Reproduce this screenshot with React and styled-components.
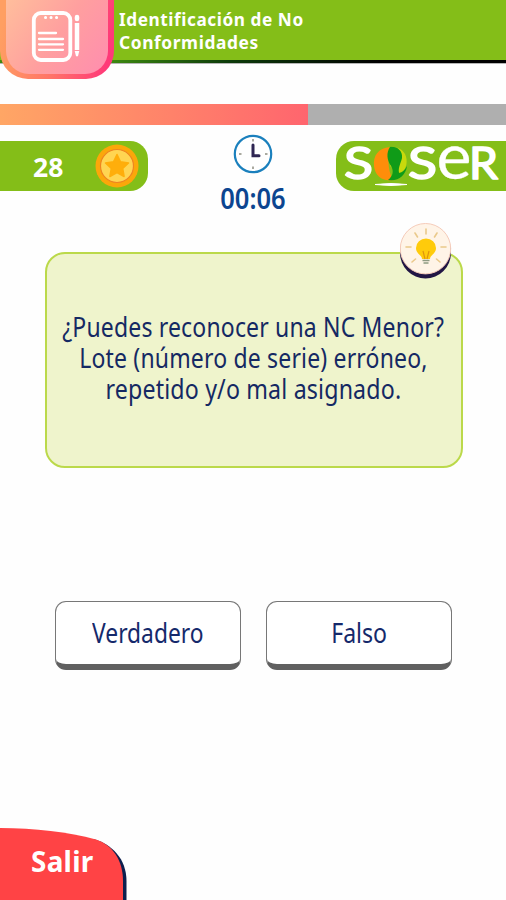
import React from 'react';
import styled, { createGlobalStyle } from 'styled-components';

const GlobalStyle = createGlobalStyle`
    body {
        margin: 0;
        background: #fefefe;
        overflow: hidden;
    }
    * {
        box-sizing: border-box;
    }
`

const Screen = styled.div`
    display: flex;
    flex-direction: column;
    width: 506px;
    height: 900px;
    overflow: hidden;
    background: #fefefe;
    font-family: "Noto Sans", sans-serif;
`

const Header = styled.header`
    display: flex;
    align-items: flex-start;
    flex: none;
    height: 64px;
    background: linear-gradient(#84be18 0 60px, transparent 60px),
        linear-gradient(90deg, #3d8a10 110px, #0c3a0a 230px, #000 380px);
    border-bottom: 1px solid #b5b5b5;
`

const CategoryBadge = styled.div`
    flex: none;
    width: 114px;
    height: 79px;
    padding: 0 6px 5px;
    border-radius: 0 0 28px 28px;
    background: linear-gradient(100deg, #ff9f62 5%, #ff7468 50%, #ff3a78 92%);
`

const BadgeFace = styled.div`
    display: flex;
    height: 74px;
    padding: 10px 0 0 25px;
    border-radius: 0 0 23px 23px;
    background: linear-gradient(125deg, #ffbe9c, #ff9f9f 50%, #ff8daf);
`

const Title = styled.h1`
    margin: 0;
    padding: 8px 0 0 5px;
    color: #fff;
    font-size: 18px;
    line-height: 23px;
    font-weight: 700;
    letter-spacing: 0.6px;
    white-space: nowrap;
`

/* Noto Sans is wider than the face of the game, so each text is narrowed */
const Narrow = styled.span`
    display: block;
    white-space: nowrap;
    transform: scaleX(${props => props.$scale});
    transform-origin: ${props => props.$origin || 'center'};
`

const Progress = styled.div`
    flex: none;
    height: 21px;
    margin-top: 40px;
    background: #afafaf;
`

const ProgressFill = styled.div`
    height: 100%;
    background: linear-gradient(90deg, #ffa665, #ff656e);
`

const Stats = styled.section`
    display: flex;
    flex: none;
    justify-content: space-between;
    height: 91px;
    padding-top: 9px;
`

const Points = styled.div`
    display: flex;
    align-items: center;
    justify-content: space-between;
    width: 148px;
    height: 50px;
    margin-top: 7px;
    padding: 0 8px 0 33px;
    border-radius: 0 18px 18px 0;
    background: #84be18;
    color: #fff;
    font-size: 27px;
    font-weight: 700;
`

const Timer = styled.div`
    display: flex;
    flex-direction: column;
    align-items: center;
    width: 80px;
    margin-left: 22px;
    color: #0c4590;
    font-size: 28px;
    font-weight: 600;
    line-height: 48px;
    svg {
        flex: none;
    }
`

const Brand = styled.div`
    width: 170px;
    height: 50px;
    margin-top: 7px;
    border-radius: 18px 0 0 18px;
    background: #84be18;
    svg {
        overflow: visible;
    }
`

const QuestionCard = styled.section`
    position: relative;
    flex: none;
    width: 418px;
    height: 216px;
    margin: 36px 0 0 45px;
    padding: 57px 1px 0 0;
    border: 2px solid #bbd94a;
    border-radius: 20px;
    background: #eff4cc;
    color: #152963;
    font-size: 27px;
    line-height: 31px;
    letter-spacing: 0.2px;
    text-align: center;
`

const Question = styled.p`
    display: flex;
    flex-direction: column;
    align-items: center;
    margin: 0;
`

const Hint = styled.div`
    position: absolute;
    top: -31px;
    right: 9px;
    width: 52px;
    height: 57px;
`

const Answers = styled.div`
    display: flex;
    flex: none;
    gap: 25px;
    margin: 133px 0 0 55px;
`

const Answer = styled.button`
    display: flex;
    align-items: center;
    justify-content: center;
    width: 186px;
    height: 69px;
    padding: 0;
    border: 1.5px solid #777;
    border-bottom: 6px solid #606060;
    border-radius: 11px;
    background: #fff;
    color: #15296b;
    font-family: inherit;
    font-size: 26.5px;
`

const Footer = styled.footer`
    display: flex;
    margin-top: auto;
`

const Exit = styled.div`
    display: grid;
    width: 128px;
    height: 73px;
    > * {
        grid-area: 1 / 1;
    }
`

const ExitLabel = styled.span`
    padding: 17px 0 0 31px;
    color: #fff;
    font-size: 29px;
    line-height: 34px;
    font-weight: 700;
    letter-spacing: 0.3px;
`

function NotesIcon() {
    return (
        <svg width="52" height="54" viewBox="0 0 52 54" fill="none" stroke="#fff" strokeLinecap="round">
            <rect x="2.8" y="3" width="36.5" height="47" rx="7" strokeWidth="3.8" />
            <path d="M14.5 7.5h.1M20 7.5h.1M25.5 7.5h.1" strokeWidth="3" />
            <path d="M8 23h17M8 29h24M8 34.3h24M8 39.8h24" strokeWidth="2.3" />
            <path d="M46 7v2" strokeWidth="4.5" />
            <path d="M46 13v27" strokeWidth="4.5" strokeLinecap="butt" />
            <path d="M45 42l1 4l1-4z" strokeWidth="2" fill="#fff" />
        </svg>
    )
}

function CoinIcon() {
    return (
        <svg width="46" height="46" viewBox="0 0 46 46">
            <circle cx="23" cy="23" r="21.5" fill="#fba70a" />
            <circle cx="23" cy="23" r="16.5" fill="#ffd552" stroke="#ef8420" strokeWidth="1.2" />
            <path
                d="M23 11.5l3.5 7.3l8 1.1l-5.8 5.6l1.4 8l-7.1-3.8l-7.1 3.8l1.4-8l-5.8-5.6l8-1.1z"
                fill="#ffae0b" stroke="#ffae0b" strokeWidth="1.5" strokeLinejoin="round"
            />
        </svg>
    )
}

function ClockIcon() {
    return (
        <svg width="40" height="40" viewBox="0 0 40 40">
            <circle cx="20" cy="20" r="18.2" fill="#fff" stroke="#1b80bd" strokeWidth="2.2" />
            <path d="M20 5v2.5M20 32.5v2.5M6 20h2.5M32 20h2.5" stroke="#aaaaa0" strokeWidth="2" />
            <path d="M20 11v10.7h6" fill="none" stroke="#2e2552" strokeWidth="3" strokeLinecap="round" />
        </svg>
    )
}

function SoserLogo() {
    return (
        <svg width="170" height="50" viewBox="0 0 170 50">
            <g fill="#fff" fontFamily="Lato" stroke="#fff" strokeLinejoin="round">
                <text x="8" y="38" fontSize="44" strokeWidth="1.6" textLength="29" lengthAdjust="spacingAndGlyphs">S</text>
                <text x="72" y="38" fontSize="44" strokeWidth="1.6" textLength="29" lengthAdjust="spacingAndGlyphs">S</text>
                <text x="100.5" y="38" fontSize="62" strokeWidth="0.3" textLength="35" lengthAdjust="spacingAndGlyphs">e</text>
                <text x="133" y="38" fontSize="44" strokeWidth="1.6" textLength="29" lengthAdjust="spacingAndGlyphs">R</text>
            </g>
            <path d="M39 43.5q16-2 32 0q-16 2-32 0z" fill="#fff" stroke="#fff" />
            <path d="M54 6C42 7 37 15 38 25C39 35 47 41 57 39C51 28 52 15 54 6z" fill="#ff8d0a" />
            <path d="M54 6C60 5 66 8 69 13C72 19 71 28 65 33L54 25z" fill="#c8d90c" />
            <path d="M54 6C61 5 67 10 66 17C65 22 62 26 63 32Q68 31 71 25C70 34 62 41 52 39C57 35 58 30 55 25C51 19 50 12 54 6z" fill="#109b18" />
        </svg>
    )
}

function BulbIcon() {
    return (
        <svg width="52" height="57" viewBox="0 0 52 57">
            <circle cx="25.5" cy="30" r="25.5" fill="#211644" />
            <circle cx="25.5" cy="25.7" r="25.2" fill="#fff4e7" stroke="#f5cbb9" />
            <path
                d="M26 6v5M15 10l2.5 4M37 10l-2.5 4M6 24h5M41 24h5M12 39l3.5-3M40 39l-3.5-3"
                stroke="#eac98b" strokeWidth="1.6" strokeLinecap="round"
            />
            <path d="M22 36c0-4-6-5-6-11a10 9.5 0 0 1 20 0c0 6-6 7-6 11z" fill="#ffcb0b" />
            <path d="M23 28l2 8M29 28l-2 8" stroke="#df950c" strokeWidth="1.2" />
            <path d="M22.5 37.5h7M23.5 40h5" stroke="#8e9a83" strokeWidth="1.7" />
        </svg>
    )
}

function ExitShape() {
    return (
        <svg width="128" height="73" viewBox="0 0 128 73">
            <path d="M93 12C112 17 126.500 32 126.500 54V73H90z" fill="#0d1f4e" />
            <path d="M0 1C35 1 68 5 96 12.500C113 18 123 34 123 54V73H0z" fill="#ff4345" />
        </svg>
    )
}

export default function App() {
    const progress = 60.9

    return (
        <Screen>
            <GlobalStyle />
            <Header>
                <CategoryBadge>
                    <BadgeFace>
                        <NotesIcon />
                    </BadgeFace>
                </CategoryBadge>
                <Title>
                    <Narrow $scale={0.955} $origin="left">Identificación de No</Narrow>
                    <Narrow $scale={0.965} $origin="left">Conformidades</Narrow>
                </Title>
            </Header>
            <Progress>
                <ProgressFill style={{ width: `${progress}%` }} />
            </Progress>
            <Stats>
                <Points>
                    <Narrow $scale={0.98} $origin="left">28</Narrow>
                    <CoinIcon />
                </Points>
                <Timer>
                    <ClockIcon />
                    <Narrow $scale={0.91}>00:06</Narrow>
                </Timer>
                <Brand>
                    <SoserLogo />
                </Brand>
            </Stats>
            <QuestionCard>
                <Hint>
                    <BulbIcon />
                </Hint>
                <Question>
                    <Narrow $scale={0.852}>¿Puedes reconocer una NC Menor?</Narrow>
                    <Narrow $scale={0.852}>Lote (número de serie) erróneo,</Narrow>
                    <Narrow $scale={0.858}>repetido y/o mal asignado.</Narrow>
                </Question>
            </QuestionCard>
            <Answers>
                <Answer>
                    <Narrow $scale={0.86}>Verdadero</Narrow>
                </Answer>
                <Answer>
                    <Narrow $scale={0.87}>Falso</Narrow>
                </Answer>
            </Answers>
            <Footer>
                <Exit>
                    <ExitShape />
                    <ExitLabel>
                        <Narrow $scale={0.96} $origin="left">Salir</Narrow>
                    </ExitLabel>
                </Exit>
            </Footer>
        </Screen>
    )
}
